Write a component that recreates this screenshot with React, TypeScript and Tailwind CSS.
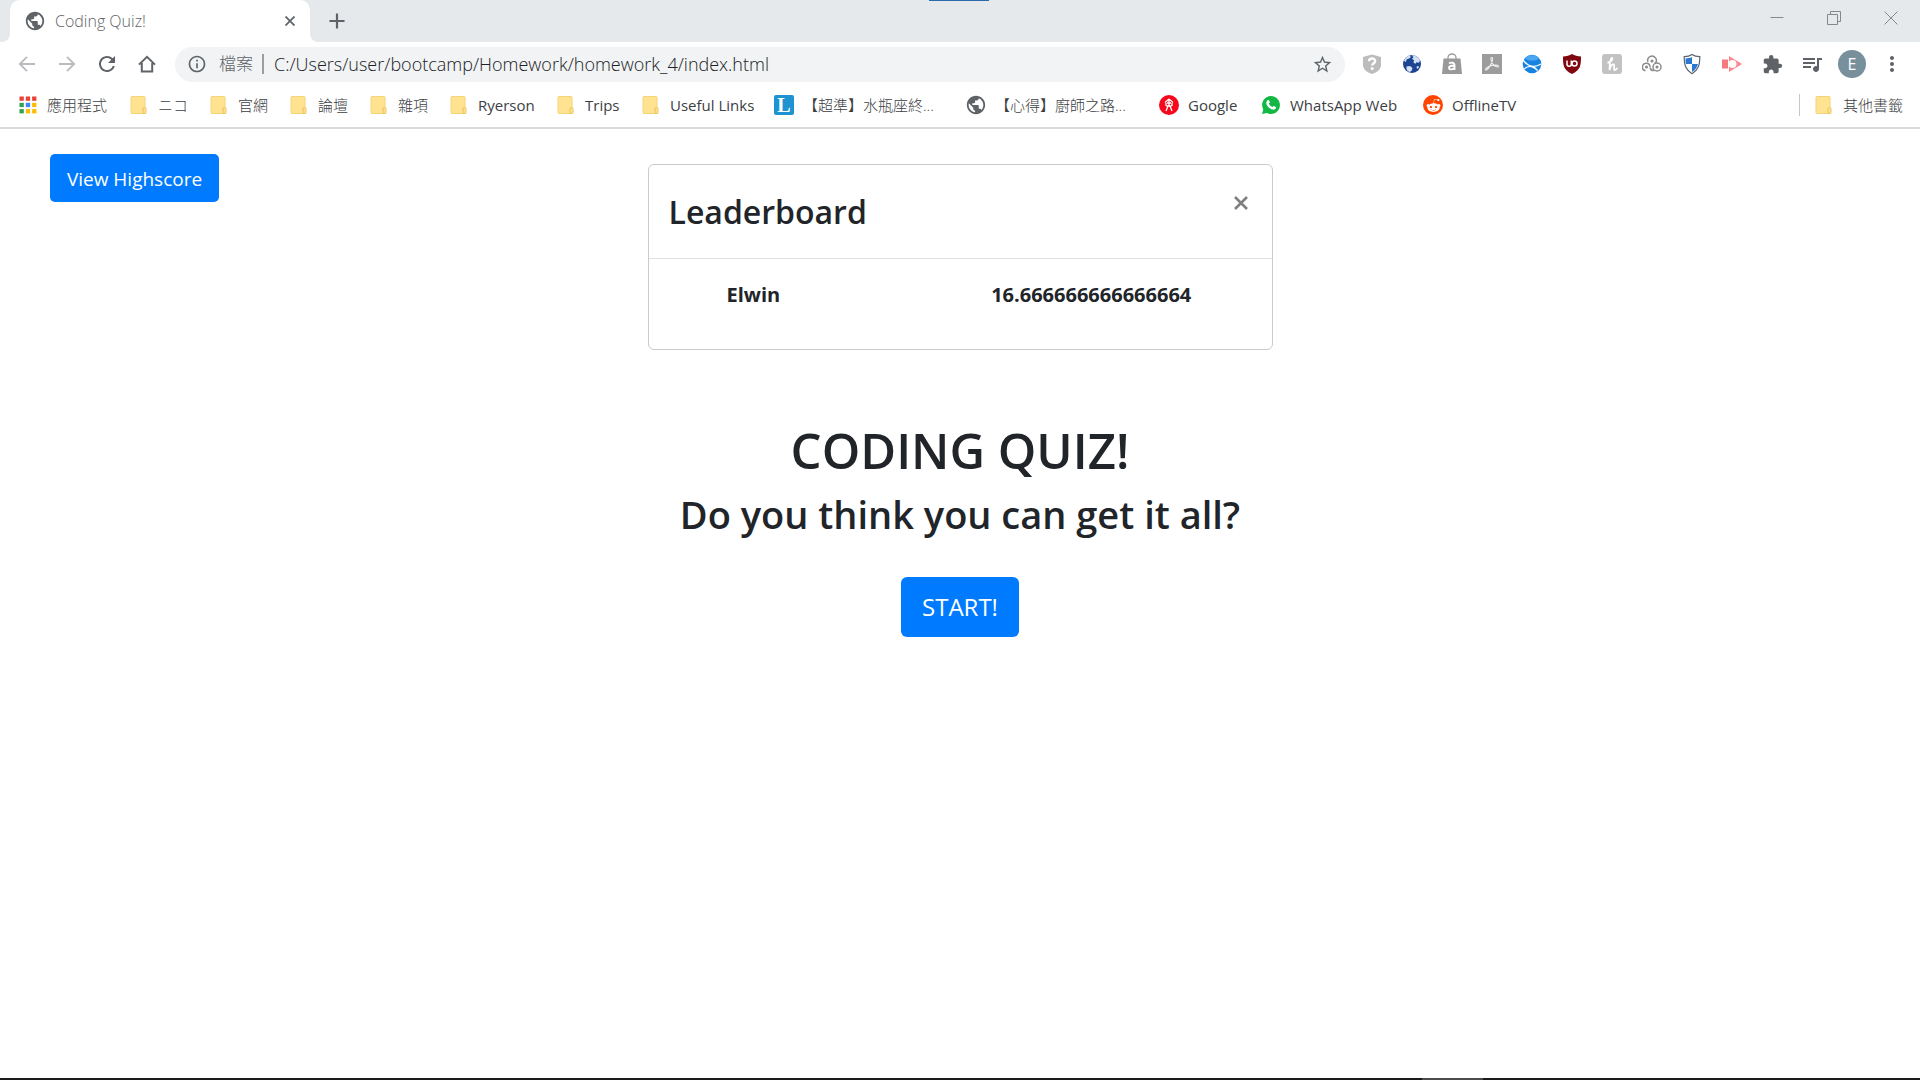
import type { ReactNode } from "react";
import { FaRedditAlien } from "react-icons/fa";
import {
  MdExtension,
  MdInfoOutline,
  MdMoreVert,
  MdPublic,
  MdQueueMusic,
  MdRefresh,
  MdStarBorder,
} from "react-icons/md";

const Arrow = ({ flip = false }: { flip?: boolean }) => (
  <svg viewBox="0 0 18 18" className={flip ? "size-[18px] rotate-180" : "size-[18px]"} fill="none" stroke="#b9bbbe" strokeWidth="1.8">
    <path d="M17 9H2M9 1.8 1.8 9 9 16.2" />
  </svg>
);

const Home = () => (
  <svg viewBox="0 0 18 18" className="size-[18px]" fill="none" stroke="#5f6368" strokeWidth="2">
    <path d="M1 9.6 9 1.8l8 7.800M3.800 8v8.500h10.400V8" />
  </svg>
);

const Folder = () => (
  <svg viewBox="0 0 18 20" className="h-5 w-[18px]">
    <rect x="1" y="1.500" width="14" height="17" rx="1" fill="#ffe391" stroke="#f3d477" />
    <path d="M13 18.500v-4.500a1.500 1.500 0 0 1 3 0v3.500a1 1 0 0 1-1 1z" fill="#ffe391" stroke="#e8c45a" />
  </svg>
);

const appColors = ["#ea4335", "#ea4335", "#ea4335", "#34a053", "#4285f4", "#fbbc04", "#34a053", "#fbbc04", "#fbbc04"];
const Apps = () => (
  <svg viewBox="0 0 18 18" className="size-[18px]">
    {appColors.map((c, i) => (
      <rect key={i} x={0.5 + (i % 3) * 6.300} y={0.5 + Math.floor(i / 3) * 6.300} width="4.300" height="4.300" fill={c} />
    ))}
  </svg>
);

const LBadge = () => (
  <span className="flex size-5 items-center justify-center rounded-xs bg-[#1d93d2] font-['Liberation_Serif',serif] text-xl leading-none font-bold text-white">
    L
  </span>
);

const RedBadge = () => (
  <svg viewBox="0 0 20 20" className="size-5">
    <circle cx="10" cy="10" r="10" fill="#f5071c" />
    <path d="M10 4 6 7.500M10 4l4 3.500M8 8h4M7.500 11h5M10 5v6M9 11l-2 5M11 11l2 5M7 8v3M13 8v3" stroke="#fff" strokeWidth="1.300" fill="none" />
  </svg>
);

const WhatsApp = () => (
  <svg viewBox="0 0 20 20" className="size-5">
    <path d="M10 1a9 9 0 1 1-4.200 17L1 19l1.300-4.500A9 9 0 0 1 10 1z" fill="#12b843" />
    <path d="M6.700 5.200c.5-.4 1-.3 1.300.2l.8 1.700c.1.400 0 .6-.9 1.600.9 1.700 2 2.700 3.600 3.400.9-1.100 1.100-1.300 1.500-1.100l1.800.9c.4.200.3.800.1 1.400-.5 1.100-2 1.600-3.200 1.300-3-.8-5-2.600-6.200-5.400-.5-1.500 0-3.200 1.200-4z" fill="#fff" />
  </svg>
);

const Reddit = () => (
  <span className="flex size-5 items-center justify-center rounded-full bg-[#ff4500]">
    <FaRedditAlien className="size-[15px] text-white" />
  </span>
);

const Question = () => (
  <svg viewBox="0 0 20 22" className="h-[22px] w-5">
    <path d="M10 1.500 19 4v8c0 4-3.800 7.500-9 9-5.200-1.500-9-5-9-9V4z" fill="#bcbcbc" />
    <path d="M7 8.300c0-3.800 6.200-3.600 6.200-.3 0 2.300-3 2.100-3 4.500" stroke="#fff" strokeWidth="2.300" fill="none" />
    <circle cx="10.200" cy="15.500" r="1.500" fill="#fff" />
  </svg>
);

const Earth = () => (
  <svg viewBox="0 0 20 20" className="size-5">
    <circle cx="10" cy="10" r="9" fill="#1d4491" />
    <path d="M2 7c1-3 3-4.800 5.500-5.500L9 3 7 4.500 4.500 5.500 4 8zM10 1.200c3.500 0 6.500 2 8 5l-1 2.500-2.500-.5-1 1.500-2-1 .5-2.500-2-1.500 1.500-1.500zM4.500 12.500 8 12l2.500 2-1 3-2 1C5.500 17.500 4 15.500 4.500 12.500zM14.500 12.500l2-.5.5 1.500-2 1.500z" fill="#d3e0f5" />
  </svg>
);

const Bag = () => (
  <svg viewBox="0 0 20 22" className="h-[22px] w-5">
    <path d="M6 6V4.500a4 3.500 0 0 1 8 0V6" stroke="#9b9b9b" strokeWidth="1.300" fill="none" />
    <path d="M1.500 5.500h17L20 21H0z" fill="#999" />
    <path d="M7 10.300c2.500-1.300 5.500-.8 5.500 1.700v5M12.500 13c-3-.5-5.500 0-5.500 1.800 0 2.200 4 2 5.500 0" stroke="#fff" strokeWidth="1.900" fill="none" />
  </svg>
);

const Pdf = () => (
  <svg viewBox="0 0 20 20" className="size-5">
    <rect width="20" height="20" fill="#9c9c9c" />
    <path d="M9.500 3.500c2 0 .8 4-.5 6.500-1.500 3-3.500 6-5 6-2-1 3.500-4.200 6-4.600 2.500-.4 6.500-.6 6.500.9s-3.500.3-5-1.500C9.800 9.300 8 3.500 9.500 3.500z" stroke="#eee" strokeWidth="1.100" fill="none" />
  </svg>
);

const BlueGlobe = () => (
  <svg viewBox="0 0 20 20" className="size-5">
    <circle cx="10" cy="10" r="9.300" fill="#1683e0" />
    <path d="M3 4.500a9 9 0 0 1 14 0c-4 3-10 3-14 0z" fill="#4ba6f2" />
    <path d="M1 6c3 4 6 6 10 6.300 3 .2 5.500-.8 8-2.300M2.500 14.800c2-2 4.500-2.500 7-2.300 2.500.7 4.500 2 6 4" stroke="#fff" strokeWidth="1.300" fill="none" />
  </svg>
);

const UBlock = () => (
  <svg viewBox="0 0 20 22" className="h-[22px] w-5">
    <path d="M10 1c2.500 1.600 5.500 2.500 9 2.500 0 9-.5 13.500-9 17.500C1.500 17 1 12.500 1 3.500c3.500 0 6.500-.9 9-2.500z" fill="#800610" />
    <path d="M5 7.500v3.800c0 2.700 4.300 2.700 4.300 0V7.500" stroke="#fff" strokeWidth="1.500" fill="none" />
    <circle cx="12.500" cy="10.500" r="2.500" stroke="#fff" strokeWidth="1.500" fill="none" />
  </svg>
);

const Honey = () => (
  <svg viewBox="0 0 20 20" className="size-5">
    <rect width="20" height="20" rx="3" fill="#c2c2c2" />
    <path d="M5.500 8.500C8 8.500 11 6 10.300 4.300 9.500 2.800 7.800 6 7.500 16c1-4 2.500-5.800 4-5.500 1.700.4-.5 5 1 5.500 1 .2 2-.8 2.800-2" stroke="#fff" strokeWidth="1.800" fill="none" />
  </svg>
);

const Rings = () => (
  <svg viewBox="0 0 20 18" className="h-[18px] w-5" fill="none" stroke="#8b8b8b" strokeWidth="1.500">
    <path d="M3.500 15.800A3.800 3.800 0 1 1 8 12" />
    <path d="M6 7a4.300 4.300 0 1 1 7 1.500" />
    <circle cx="15" cy="12" r="4" />
    <path d="M8 12.500c.5 2 2 3.300 4 3" />
    <circle cx="4.500" cy="12" r=".8" />
    <circle cx="10" cy="6" r=".8" />
    <circle cx="15" cy="12" r=".8" />
  </svg>
);

const Shield = () => (
  <svg viewBox="0 0 18 22" className="h-[22px] w-[18px]">
    <path d="M9 2c2 1.500 4.500 2 7.500 2 0 8.500-1.500 13-7.500 16.500C3 17 1.500 12.500 1.500 4 4.500 4 7 3.500 9 2z" fill="#fff" />
    <path d="M9 4v7H3C2.600 9.500 2.500 8 2.500 5.500 5 5.300 7 5 9 4zM9 11h6c-1 3.500-2.800 6-6 8z" fill="#2b78d0" />
    <path d="M9 1.500c2 1.500 4.500 2.200 7.800 2.200 0 8.800-1.600 13.300-7.800 17-6.200-3.700-7.800-8.200-7.800-17C4.500 3.700 7 3 9 1.500z" stroke="#5a6570" strokeWidth="1.200" fill="none" />
  </svg>
);

const Recorder = () => (
  <svg viewBox="0 0 22 18" className="h-[18px] w-[22px]">
    <rect x="1" y="4.500" width="6" height="9" fill="#f9787e" />
    <path d="M8 1 21 9 8 17z" fill="#fb868b" />
    <circle cx="11.500" cy="9" r="4" fill="#fff" />
  </svg>
);

const bookmarks: { label: string; icon: ReactNode; width: string }[] = [
  { label: "應用程式", icon: <Apps />, width: "w-[111px] font-light" },
  { label: "ニコ", icon: <Folder />, width: "w-20 font-light" },
  { label: "官網", icon: <Folder />, width: "w-20 font-light" },
  { label: "論壇", icon: <Folder />, width: "w-20 font-light" },
  { label: "雜項", icon: <Folder />, width: "w-20 font-light" },
  { label: "Ryerson", icon: <Folder />, width: "w-[107px]" },
  { label: "Trips", icon: <Folder />, width: "w-[85px]" },
  { label: "Useful Links", icon: <Folder />, width: "w-[133px]" },
  { label: "【超準】水瓶座終...", icon: <LBadge />, width: "w-48 font-light" },
  { label: "【心得】廚師之路...", icon: <MdPublic className="size-[22px] shrink-0 text-[#5f6368]" />, width: "w-[193px] font-light" },
  { label: "Google", icon: <RedBadge />, width: "w-[102px]" },
  { label: "WhatsApp Web", icon: <WhatsApp />, width: "w-[162px]" },
  { label: "OfflineTV", icon: <Reddit />, width: "w-[100px]" },
];

const extensions: { label: string; icon: ReactNode }[] = [
  { label: "Site safety", icon: <Question /> },
  { label: "Globe", icon: <Earth /> },
  { label: "Shopping", icon: <Bag /> },
  { label: "PDF", icon: <Pdf /> },
  { label: "Browser", icon: <BlueGlobe /> },
  { label: "Ad blocker", icon: <UBlock /> },
  { label: "Coupons", icon: <Honey /> },
  { label: "Rings", icon: <Rings /> },
  { label: "Shield", icon: <Shield /> },
  { label: "Recorder", icon: <Recorder /> },
  { label: "Extensions", icon: <MdExtension className="size-[21px] text-[#5f6368]" /> },
  { label: "Media", icon: <MdQueueMusic className="size-6 text-[#5f6368]" /> },
];

const IconButton = ({ label, children }: { label: string; children: ReactNode }) => (
  <button type="button" aria-label={label} className="flex h-9 w-10 shrink-0 items-center justify-center">
    {children}
  </button>
);

const Bookmark = ({ label, icon, width }: { label: string; icon: ReactNode; width: string }) => (
  <li className={width}>
    <a href="#" className="flex items-center gap-[9px] whitespace-nowrap">
      <span className="flex size-5 shrink-0 items-center justify-center">{icon}</span>
      {label}
    </a>
  </li>
);

function TabStrip() {
  return (
    <div className="flex h-[42px] justify-between bg-[#e5e9ec]">
      <div className="flex">
        <div className="w-[10px] bg-white">
          <div className="h-full rounded-br-lg bg-[#e5e9ec]" />
        </div>
        <div className="flex w-[300px] items-center rounded-t-[10px] bg-white pr-[10px] pl-[14px] text-base text-[#5f6368]">
          <MdPublic className="size-[22px]" />
          <span className="ml-[9px] flex-1 font-light">Coding Quiz!</span>
          <button type="button" aria-label="Close tab" className="flex size-5 items-center justify-center">
            <svg viewBox="0 0 10 10" className="size-[10px]" stroke="#5f6368" strokeWidth="1.800">
              <path d="M.5.5l9 9M9.500.5l-9 9" />
            </svg>
          </button>
        </div>
        <div className="w-[10px] bg-white">
          <div className="h-full rounded-bl-lg bg-[#e5e9ec]" />
        </div>
        <button type="button" aria-label="New tab" className="ml-[6px] flex w-[22px] items-center justify-center">
          <svg viewBox="0 0 16 16" className="size-4" stroke="#5f6368" strokeWidth="2.200">
            <path d="M8 .5v15M.5 8h15" />
          </svg>
        </button>
      </div>
      <div className="flex h-9 pr-px">
        <button type="button" aria-label="Minimize" className="flex w-[57px] items-center justify-center">
          <svg viewBox="0 0 14 14" className="size-[14px]" stroke="#85888b"><path d="M.5 6.500h13" /></svg>
        </button>
        <button type="button" aria-label="Restore" className="flex w-[57px] items-center justify-center">
          <svg viewBox="0 0 14 14" className="size-[14px]" stroke="#85888b" fill="none">
            <path d="M.5 3.500h10v10H.5zM3.500 3.500v-3h10v10h-3" />
          </svg>
        </button>
        <button type="button" aria-label="Close" className="flex w-[57px] items-center justify-center">
          <svg viewBox="0 0 14 14" className="size-[14px]" stroke="#85888b"><path d="M.5.5l13 13M13.500.5l-13 13" /></svg>
        </button>
      </div>
    </div>
  );
}

function Toolbar() {
  return (
    <div className="flex items-center pt-1 pr-2 pb-px pl-[7px]">
      <IconButton label="Back"><Arrow /></IconButton>
      <IconButton label="Forward"><Arrow flip /></IconButton>
      <IconButton label="Reload"><MdRefresh className="size-6 text-[#5f6368]" /></IconButton>
      <IconButton label="Home"><Home /></IconButton>
      <div className="mr-[7px] ml-2 flex h-[35px] flex-1 items-center rounded-full bg-[#f1f3f4] pr-3 pl-3">
        <MdInfoOutline className="size-5 text-[#5f6368]" />
        <label htmlFor="address" className="ml-3 border-r-2 border-[#9a9da1] pr-[9px] text-[17px] leading-5 font-light text-[#5f6368]">
          檔案
        </label>
        <input
          id="address"
          type="text"
          defaultValue="C:/Users/user/bootcamp/Homework/homework_4/index.html"
          className="ml-[10px] min-w-0 flex-1 bg-transparent text-lg leading-6 font-light text-[#202124] outline-none"
        />
        <button type="button" aria-label="Bookmark this page">
          <MdStarBorder className="size-[21px] text-[#5f6368]" />
        </button>
      </div>
      {extensions.map((e) => (
        <IconButton key={e.label} label={e.label}>{e.icon}</IconButton>
      ))}
      <IconButton label="Profile">
        <span className="flex size-7 items-center justify-center rounded-full bg-[#78909c] text-base text-white">E</span>
      </IconButton>
      <IconButton label="Menu"><MdMoreVert className="size-6 text-[#5f6368]" /></IconButton>
    </div>
  );
}

function BookmarksBar() {
  return (
    <nav aria-label="Bookmarks" className="flex h-[46px] items-center justify-between border-b-2 border-[#d8dadd] pr-[17px] pl-[18px] text-[15px] text-[#3c4043]">
      <ul className="flex">
        {bookmarks.map((b) => (
          <Bookmark key={b.label} {...b} />
        ))}
      </ul>
      <ul className="flex border-l border-[#c5c8cb] pl-[14px]">
        <Bookmark label="其他書籤" icon={<Folder />} width="w-auto font-light" />
      </ul>
    </nav>
  );
}

function Leaderboard() {
  return (
    <section className="rounded-md border border-[#c9cacb] bg-white">
      <header className="flex items-start justify-between border-b border-[#dee2e6] p-5">
        <h3 className="mt-[6px] mb-[5px] text-[32px] leading-[42px] font-semibold">Leaderboard</h3>
        <button type="button" aria-label="Close" className="mt-2 mr-px flex size-5 items-center justify-center">
          <svg viewBox="0 0 14 14" className="size-[14px]" stroke="#7f7f7f" strokeWidth="2.600">
            <path d="M1 1l12 12M13 1 1 13" />
          </svg>
        </button>
      </header>
      <table className="mt-[21px] mb-[39px] w-full text-left text-xl leading-[30px]">
        <tbody>
          <tr>
            <th scope="row" className="w-[55%] pl-[78px] font-bold">Elwin</th>
            <td className="font-bold">16.666666666666664</td>
          </tr>
        </tbody>
      </table>
    </section>
  );
}

export default function App() {
  return (
    <div className="relative flex min-h-screen flex-col bg-white font-['Open_Sans','Noto_Sans_CJK_TC',sans-serif] text-[#212529]">
      <div className="absolute top-0 left-[929px] h-px w-[60px] bg-[#2a6cab]" />
      <TabStrip />
      <Toolbar />
      <BookmarksBar />
      <main className="grid flex-1 grid-cols-[1fr_625px_1fr] items-start">
        <button type="button" className="mt-[25px] ml-[50px] h-12 w-[169px] justify-self-start rounded-[5px] bg-[#007bff] pt-[2px] text-[19px] text-white">
          View Highscore
        </button>
        <div className="mt-[35px] text-center">
          <Leaderboard />
          <h1 className="mt-[70px] text-[49px] leading-[60px] font-semibold">CODING QUIZ!</h1>
          <h2 className="mt-[10px] text-[38px] leading-[48px] font-semibold">Do you think you can get it all?</h2>
          <button type="button" className="mt-[39px] h-[60px] w-[118px] rounded-md bg-[#007bff] text-2xl text-white">
            START!
          </button>
        </div>
      </main>
      <footer className="flex h-[2px] justify-end bg-[#1b1a1c] pr-[437px]">
        <div className="w-[61px] bg-[#4b4a4c]" />
      </footer>
    </div>
  );
}
